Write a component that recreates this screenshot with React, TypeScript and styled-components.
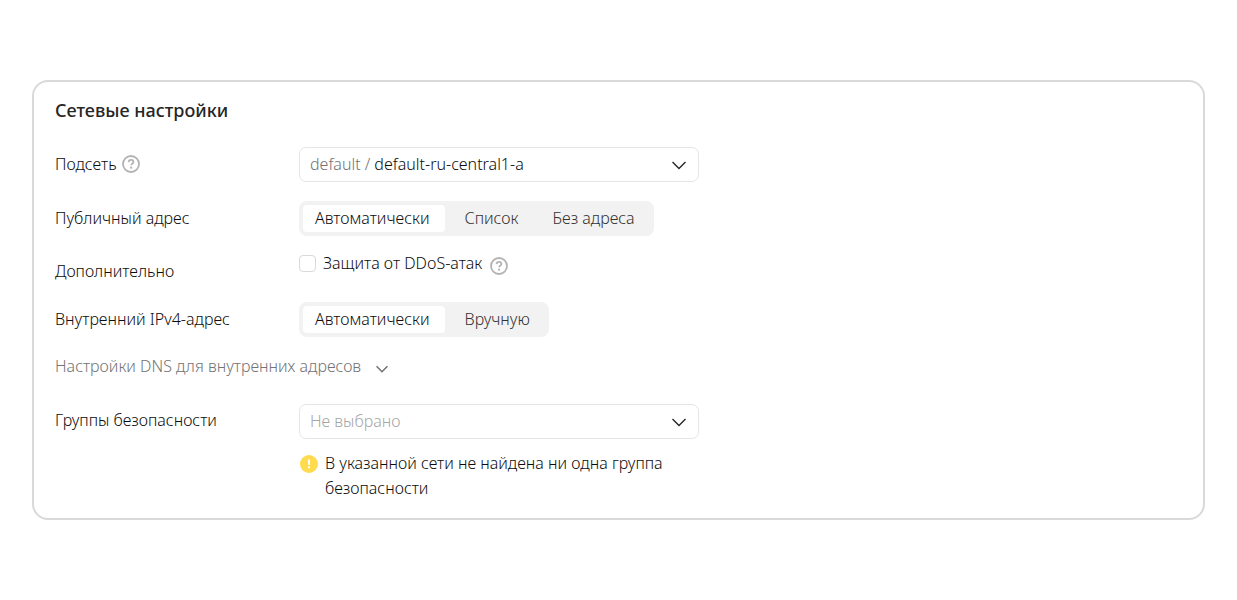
import React, { useState } from 'react';
import styled, { createGlobalStyle } from 'styled-components';

const GlobalStyle = createGlobalStyle`
  *, *::before, *::after { box-sizing: border-box; }
  body {
    margin: 0;
    background: #fff;
    color: #0d0d0d;
    font: 300 16px/25px "Noto Sans", "Open Sans", sans-serif;
  }
  button, input, select { font: inherit; color: inherit; }
`;

const Page = styled.main`
  padding: 80px 32px;
`;

const Card = styled.section`
  padding: 15px 21px 17px;
  border: 2px solid #d9d9d9;
  border-radius: 16px;
`;

const Title = styled.h2`
  margin: 0 0 24px;
  font-size: 18px;
  line-height: 26px;
  font-weight: 500;
  color: #262626;
`;

const Form = styled.form`
  display: flex;
  flex-direction: column;
  gap: 19px;
`;

const Row = styled.div<{ $top?: boolean }>`
  display: grid;
  grid-template-columns: 244px minmax(0, 400px);
  align-items: ${p => (p.$top ? 'start' : 'center')};
`;

const Label = styled.div<{ $top?: boolean }>`
  display: flex;
  align-items: center;
  gap: 5px;
  padding: ${p => (p.$top ? '4px 0 0' : '0 0 1px')};
  line-height: 24px;
`;

const SelectBox = styled.div`
  display: grid;
  grid-template-columns: auto minmax(0, 1fr);
  align-items: center;
  height: 35px;
  padding: 0 10px;
  border: 1px solid #e5e5e5;
  border-radius: 7px;
  svg {
    grid-area: 1 / 2;
    justify-self: end;
    pointer-events: none;
  }
`;

const Prefix = styled.span`
  margin-right: 4px;
  color: #737373;
`;

const Select = styled.select<{ $empty?: boolean }>`
  grid-area: 1 / 2;
  appearance: none;
  width: 100%;
  padding: 0;
  border: 0;
  outline: 0;
  background: none;
  color: ${p => (p.$empty ? '#a6a6a6' : '#0d0d0d')};
`;

const Segments = styled.div`
  display: flex;
  justify-self: start;
  height: 35px;
  padding: 4px;
  border-radius: 8px;
  background: #f2f2f2;
`;

const Segment = styled.label<{ $active: boolean }>`
  display: flex;
  align-items: center;
  padding: 0 15px 0 12px;
  margin-right: ${p => (p.$active ? '8px' : '0')};
  border-radius: 4px;
  background: ${p => (p.$active ? '#fff' : 'transparent')};
  color: ${p => (p.$active ? '#0d0d0d' : '#333')};
  cursor: pointer;
  & + & { min-width: 88px; }
`;

const HiddenRadio = styled.input`
  position: absolute;
  opacity: 0;
  pointer-events: none;
`;

const CheckRow = styled.div`
  display: flex;
  align-items: center;
  height: 28px;
  padding-bottom: 11px;
  gap: 8px;
`;

const CheckLabel = styled.label`
  display: flex;
  align-items: center;
  gap: 7px;
`;

const Checkbox = styled.input`
  appearance: none;
  width: 17px;
  height: 17px;
  margin: 0;
  border: 1px solid #d9d9d9;
  border-radius: 4px;
  &:checked { background: #ffdb4d; }
`;

const HelpButton = styled.button<{ $low?: boolean }>`
  display: flex;
  padding: ${p => (p.$low ? '4px 0 0' : '0')};
  border: 0;
  background: none;
  color: #b3b3b3;
`;

const Disclosure = styled.button`
  display: flex;
  align-items: center;
  align-self: flex-start;
  gap: 14px;
  height: 29px;
  padding: 0 0 8px;
  border: 0;
  background: none;
  color: #737373;
  svg { margin-top: 4px; }
`;

const Warning = styled.p`
  display: flex;
  align-items: flex-start;
  gap: 7px;
  margin: 12px 0 0;
  padding-left: 1px;
  svg { flex: none; margin-top: 4px; }
`;

const Help = ({ label, low }: { label: string; low?: boolean }) => (
  <HelpButton type="button" aria-label={label} $low={low}>
    <svg width="18" height="18" viewBox="0 0 18 18" fill="none" stroke="currentColor" strokeWidth="1.8">
      <circle cx="9" cy="9" r="8" />
      <path d="M6.6 7.1C6.7 5.6 7.6 4.9 9 4.9c1.4 0 2.4.8 2.4 2 0 1.8-2.3 1.7-2.3 3.4" />
      <circle cx="9.1" cy="12.7" r="1.1" fill="currentColor" stroke="none" />
    </svg>
  </HelpButton>
);

const Chevron = ({ small }: { small?: boolean }) => (
  <svg width={small ? 14 : 18} height={small ? 14 : 18} viewBox="0 0 18 18" fill="none" stroke={small ? '#737373' : '#262626'} strokeWidth={small ? 2 : 1.4} aria-hidden="true">
    <path d={small ? 'M2 5.5l7 7 7-7' : 'M2.5 6l6.5 6.5 6.5-6.5'} />
  </svg>
);

function SegmentedControl({ name, label, options }: { name: string; label: string; options: string[] }) {
  const [value, setValue] = useState(options[0]);
  return (
    <Segments role="radiogroup" aria-label={label}>
      {options.map(o => (
        <Segment key={o} $active={o === value}>
          <HiddenRadio type="radio" name={name} checked={o === value} onChange={() => setValue(o)} />
          {o}
        </Segment>
      ))}
    </Segments>
  );
}

export default function App() {
  return (
    <>
      <GlobalStyle />
      <Page>
        <Card>
          <Title>Сетевые настройки</Title>
          <Form>
            <Row>
              <Label><label htmlFor="subnet">Подсеть</label><Help label="О подсети" /></Label>
              <SelectBox>
                <Prefix>default /</Prefix>
                <Select id="subnet"><option>default-ru-central1-a</option></Select>
                <Chevron />
              </SelectBox>
            </Row>
            <Row>
              <Label>Публичный адрес</Label>
              <SegmentedControl name="public" label="Публичный адрес" options={['Автоматически', 'Список', 'Без адреса']} />
            </Row>
            <Row $top>
              <Label $top>Дополнительно</Label>
              <CheckRow>
                <CheckLabel><Checkbox type="checkbox" />Защита от DDoS-атак</CheckLabel>
                <Help label="О защите" low />
              </CheckRow>
            </Row>
            <Row>
              <Label>Внутренний IPv4-адрес</Label>
              <SegmentedControl name="internal" label="Внутренний IPv4-адрес" options={['Автоматически', 'Вручную']} />
            </Row>
            <Disclosure type="button" aria-expanded="false">
              Настройки DNS для внутренних адресов
              <Chevron small />
            </Disclosure>
            <Row $top>
              <Label $top><label htmlFor="groups">Группы безопасности</label></Label>
              <div>
                <SelectBox>
                  <Select id="groups" $empty><option>Не выбрано</option></Select>
                  <Chevron />
                </SelectBox>
                <Warning>
                  <svg width="18" height="18" viewBox="0 0 18 18" aria-hidden="true">
                    <circle cx="9" cy="9" r="9" fill="#ffdb4d" />
                    <path d="M9 4.5v5.2M9 11.3v2" stroke="#fff" strokeWidth="2" />
                  </svg>
                  <span>В указанной сети не найдена ни одна группа безопасности</span>
                </Warning>
              </div>
            </Row>
          </Form>
        </Card>
      </Page>
    </>
  );
}
